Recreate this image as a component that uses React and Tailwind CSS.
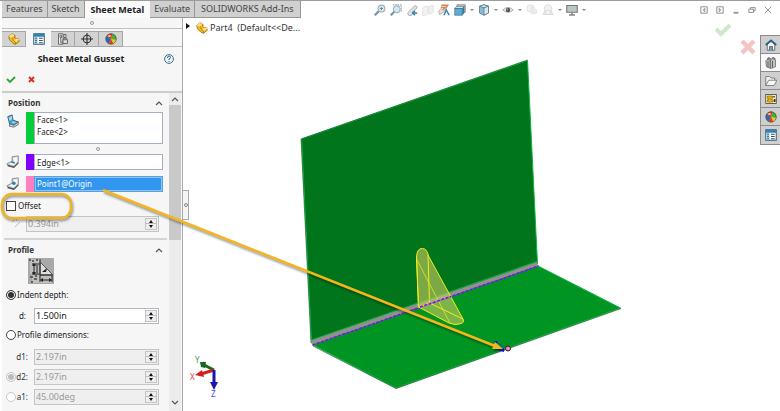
import { useState } from "react";

const PartIcon = ({ className }) => (
  <svg className={className} viewBox="0 0 16 16">
    <path d="M1 5l4-4 4 2v3l2 2 3-1 1 4-5 4-3-1-5-5z" fill="#f5b921" stroke="#8a6205" strokeWidth="1" />
    <path d="M5 1l4 2-3 3-5-1zM8 9l3-1 3-1 1 2-5 3z" fill="#ffe07a" />
    <path d="M6 6l1 4 3 2v3M9 3v3" fill="none" stroke="#a87807" />
  </svg>
);

const PropertiesIcon = ({ className }) => (
  <svg className={className} viewBox="0 0 16 16">
    <rect x="1" y="1" width="14" height="14" fill="#fff" stroke="#3d6379" strokeWidth="1.4" />
    <path d="M1 3h14" stroke="#2f82b2" strokeWidth="4" />
    <path d="M2 10h4" stroke="#9bcbe5" strokeWidth="9" />
    <path d="M3 7h2M3 10h2M3 13h2M8 7h5M8 10h5M8 13h5" stroke="#315060" strokeWidth="1.3" />
  </svg>
);

const ConfigIcon = ({ className }) => (
  <svg className={className} viewBox="0 0 16 16" fill="none" stroke="#606060" strokeWidth="1.2">
    <path d="M2 1h6v14H2zM4 3h2v3H4zM5 6v7h3" fill="#eee" />
    <path d="M9 2h3v4H9zM8 9h6v5H8zM9 9V7h4v2" fill="#ddd" />
  </svg>
);

const TargetIcon = ({ className }) => (
  <svg className={className} viewBox="0 0 16 16" fill="none" stroke="#303030" strokeWidth="1.5">
    <circle cx="8" cy="8" r="5" />
    <path d="M8 0v16M0 8h16" />
  </svg>
);

const BallIcon = ({ className }) => (
  <svg className={className} viewBox="0 0 16 16">
    <circle cx="8" cy="8" r="7" fill="#f3c623" />
    <path d="M8 8L2 4a7 7 0 0 1 8-3z" fill="#d93422" />
    <path d="M8 8l2-7a7 7 0 0 1 5 8z" fill="#45ae41" />
    <path d="M8 8L2 4a7 7 0 0 0 3 10z" fill="#2769b5" />
    <path d="M8 8l-3 6a7 7 0 0 0 6 0z" fill="#e23b22" />
    <circle cx="8" cy="8" r="7" fill="none" stroke="#444" strokeWidth=".8" />
    <ellipse cx="6" cy="4" rx="2" ry="1.2" fill="#fff" opacity=".7" />
  </svg>
);

const FacesIcon = () => (
  <svg className="size-3.5" viewBox="0 0 16 16">
    <path d="M2 3l5-2 1 6 6 2-5 4-5-2z" fill="#4a9dcc" stroke="#2a5876" />
    <path d="M3 4l4-2v4L4 8z" fill="#a5d8f2" />
    <path d="M4 11v3l5 1 5-3V9l-5 4z" fill="#d3d8da" stroke="#5d6b72" />
    <path d="M8 8l4 1-3 2-3-1z" fill="#8accec" />
  </svg>
);

const EdgeIcon = ({ point }) => (
  <svg className="size-3.5" viewBox="0 0 16 16">
    <path d="M7 2l7-1v8l-5 5-7-2-1-2 6-3z" fill="#c4c7c9" stroke="#80878b" />
    <path d="M8 3l5-1v6L9 9zM3 10l4-2 5 1-3 3z" fill="#f6f7f7" />
    <path d="M2 12l7 2 5-5" fill="none" stroke="#555" strokeWidth="1.5" />
    {point ? (
      <circle cx="9" cy="7" r="2" fill="#2781b9" />
    ) : (
      <path d="M6 8l4 1" stroke="#2781b9" strokeWidth="2" />
    )}
  </svg>
);

const GussetImage = () => (
  <svg className="h-[26px] w-[26px]" viewBox="0 0 26 26">
    <rect width="26" height="26" fill="#a9a9a9" />
    <path d="M2 1h10v15H2zM4 17h20v8H4z" fill="#bfc0bd" />
    <path d="M12 4v13h13z" fill="#dcdedb" stroke="#555" />
    <path d="M12 1v16h12M12 17v7M24 17v7M4 6h7M4 16h7M6 6v10M9 7v8M13 22h10" fill="none" stroke="#222" />
    <path d="M4 8l2-3 2 3zM4 14l2 3 2-3zM15 20l-3 2 3 2zM21 20l3 2-3 2zM14 14l5-4-1 4z" fill="#222" />
    <path d="M1 2h2M4 3h2M8 2h2M2 19h3M6 21h3M3 24h2M7 18h2" stroke="#444" strokeWidth="1.5" />
  </svg>
);

const Chevron = ({ className = "size-2", down }) => (
  <svg className={className} viewBox="0 0 8 8" fill="none" stroke="#555" strokeWidth="1.2">
    <path d={down ? "M1 2l3 3 3-3" : "M1 6l3-3 3 3"} />
  </svg>
);

const panelTabs = [
  { label: "Feature tree", Icon: PartIcon },
  { label: "Properties", Icon: PropertiesIcon },
  { label: "Configurations", Icon: ConfigIcon },
  { label: "Dimensions", Icon: TargetIcon },
  { label: "Appearances", Icon: BallIcon },
];

const ribbonTabs = ["Features", "Sketch", "Sheet Metal", "Evaluate", "SOLIDWORKS Add-Ins"];

const RibbonTabs = () => {
  const [active, setActive] = useState("Sheet Metal");
  return (
    <nav className="flex h-[18px] shrink-0 border-t border-[#9c9c9c] pl-0.5">
      {ribbonTabs.map((tab) => (
        <button
          key={tab}
          onClick={() => setActive(tab)}
          className={
            tab === active
              ? "bg-[#fafafa] px-1.5 text-[9px] font-bold whitespace-nowrap text-[#222]"
              : "border-r border-b border-[#979797] bg-[#d0d0d0] px-1 text-[9px] whitespace-nowrap text-[#444] last:px-1.5"
          }
        >
          {tab}
        </button>
      ))}
    </nav>
  );
};

const Caret = () => (
  <svg className="mr-1 ml-1 h-1 w-1" viewBox="0 0 4 4">
    <path d="M0 1h4L2 3z" fill="#888" />
  </svg>
);

const ViewToolbar = () => (
  <div className="flex items-center">
    <button aria-label="Zoom to fit" className="mr-1">
      <svg className="size-3" viewBox="0 0 16 16" fill="none">
        <path d="M1 15l6-6" stroke="#6f93ab" strokeWidth="3" />
        <circle cx="10" cy="6" r="4.5" fill="#dce9ef" stroke="#9fb0ba" strokeWidth="1.5" />
        <path d="M8 6h4M10 4v4" stroke="#50738a" />
      </svg>
    </button>
    <button aria-label="Zoom to area" className="mr-1">
      <svg className="size-3" viewBox="0 0 16 16" fill="none">
        <path d="M4 1h11v10" stroke="#777" strokeDasharray="2 1" />
        <path d="M1 15l5-5" stroke="#6f93ab" strokeWidth="3" />
        <circle cx="9" cy="7" r="4.5" fill="#d4e8f2" stroke="#a3b4bd" strokeWidth="1.5" />
      </svg>
    </button>
    <button aria-label="Previous view" className="mr-1">
      <svg className="size-3" viewBox="0 0 16 16" fill="none">
        <path d="M3 11l8-8a2 2 0 0 1 3 3L8 11a3 3 0 1 1-5 0z" fill="#e5e5e5" stroke="#939393" />
        <path d="M15 12H9m3-3l-3 3 3 3" stroke="#3388b5" strokeWidth="2" />
      </svg>
    </button>
    <button aria-label="Section view" className="mr-1 opacity-40">
      <svg className="size-3" viewBox="0 0 16 16">
        <path d="M1 5l3-2h4v10l-3 2H1zM9 4l3-2h3v9l-3 2H9z" fill="#ddd" stroke="#aaa" />
      </svg>
    </button>
    <button aria-label="Dynamic annotation" className="mr-1">
      <svg className="size-3" viewBox="0 0 16 16" fill="none">
        <path d="M5 1h9l-3 5-5 6-4 2-1-4 3-4z" fill="#eddcc6" stroke="#a5a5a5" />
        <path d="M5 2h8M4 5l8-1M6 8l7-6" stroke="#e08246" strokeWidth="1.5" />
        <path d="M8 15l3-7 4 7" stroke="#3588b4" strokeWidth="2" />
      </svg>
    </button>
    <button aria-label="View orientation" className="flex items-center">
      <svg className="size-3" viewBox="0 0 16 16">
        <path d="M4 4V1h11v10h-3" fill="#e3e3e3" stroke="#777" />
        <path d="M1 6h10v9H1z" fill="#5babd2" stroke="#4a7a97" />
        <path d="M1 6l3-3h10l-3 3z" fill="#d5e5ed" stroke="#38617a" />
        <path d="M11 6l3-3v9l-3 3z" fill="#38789c" />
      </svg>
      <Caret />
    </button>
    <button aria-label="Display style" className="flex items-center">
      <svg className="size-3" viewBox="0 0 16 16" stroke="#58717f">
        <path d="M2 3l6-2 6 2v9l-6 3-6-3z" fill="#7dc1e0" />
        <path d="M2 3l6 2 6-2-6-2z" fill="#ddeef6" />
        <path d="M8 5l6-2v9l-6 3z" fill="#e1e8eb" />
      </svg>
      <Caret />
    </button>
    <button aria-label="Hide and show items" className="flex items-center">
      <svg className="size-3" viewBox="0 0 16 16">
        <path d="M1 8q7-7 14 0-7 6-14 0z" fill="#eee" stroke="#999" />
        <circle cx="8" cy="8" r="3" fill="#555" />
        <circle cx="7" cy="7" r="1" fill="#bbb" />
      </svg>
      <Caret />
    </button>
    <button aria-label="Edit appearance" className="mr-1 opacity-40">
      <svg className="size-3" viewBox="0 0 16 16">
        <circle cx="6" cy="6" r="5" fill="#ddd" stroke="#aaa" />
        <path d="M6 6l4-4v8l-3 5" fill="#bbb" />
        <circle cx="11" cy="10" r="4" fill="#ccc" />
      </svg>
    </button>
    <button aria-label="Apply scene" className="flex items-center">
      <svg className="size-3 opacity-40" viewBox="0 0 16 16">
        <circle cx="8" cy="6" r="5" fill="#ddd" stroke="#999" />
        <path d="M1 14l3-5h8l3 5z" fill="#bbb" stroke="#999" />
        <circle cx="8" cy="11" r="2" fill="#eee" />
      </svg>
      <Caret />
    </button>
    <button aria-label="View settings" className="flex items-center">
      <svg className="size-3" viewBox="0 0 16 16">
        <path d="M1 2h14v9H1z" fill="#bcc8c8" stroke="#777" strokeWidth="1.5" />
        <path d="M8 11v3M4 14.5h8" stroke="#888" strokeWidth="2" />
      </svg>
      <Caret />
    </button>
  </div>
);

const WindowButtons = () => (
  <div className="flex items-center gap-2 pr-2">
    {[
      ["Dock left", "M1 1h8v8H1zM6 3L4 5l2 2z"],
      ["Dock right", "M1 1h8v8H1zM4 3l2 2-2 2z"],
      ["Minimize", "M2 8h6M2 9h6"],
      ["Restore", "M1 4h6v4H1zM3 4V2h6v4H7"],
      ["Close", "M1 1l8 8M9 1L1 9"],
    ].map(([label, d]) => (
      <button key={label} aria-label={label}>
        <svg className="size-2" viewBox="0 0 10 10" fill="none" stroke="#777">
          <path d={d} />
        </svg>
      </button>
    ))}
  </div>
);

const Section = ({ title, children }) => (
  <section className="pr-1.5 pl-1">
    <div className="flex h-4 items-center justify-between pl-0.5">
      <h2 className="text-[8px] font-bold text-[#333]">{title}</h2>
      <button aria-label={`Collapse ${title}`}>
        <Chevron />
      </button>
    </div>
    {children}
  </section>
);

const Spinner = ({ id, value, disabled }) => (
  <div
    className={
      disabled
        ? "flex h-4 grow border border-[#c4c4c4] bg-[#efefef] p-px text-[#999]"
        : "flex h-4 grow border border-[#b3b9c0] bg-white p-px text-[#222]"
    }
  >
    <input id={id} defaultValue={value} disabled={disabled} className="w-0 grow text-[9px] outline-none" />
    <div className="flex w-3 flex-col border border-[#c4c4c4] bg-[#eee]">
      <button aria-label={`Increase ${id}`} className="flex h-1/2 items-center justify-center border-b border-[#bbb]">
        <svg className="h-[3px] w-1" viewBox="0 0 4 3">
          <path d="M2 0l2 3H0z" fill="#111" />
        </svg>
      </button>
      <button aria-label={`Decrease ${id}`} className="flex h-1/2 items-center justify-center">
        <svg className="h-[3px] w-1" viewBox="0 0 4 3">
          <path d="M2 3l2-3H0z" fill="#111" />
        </svg>
      </button>
    </div>
  </div>
);

const radio =
  "size-2.5 shrink-0 appearance-none rounded-full border border-[#444] bg-white checked:bg-[#333] checked:shadow-[inset_0_0_0_1px_white] disabled:border-[#c8c8c8] disabled:checked:bg-[#bbb]";

const PropertyPanel = () => (
  <aside className="ml-0.5 flex w-[181px] shrink-0 flex-col border-r border-[#aaa] bg-[#f6f6f6]">
    <div className="flex h-[11px] shrink-0 items-center justify-center border-b border-[#c0c0c0]">
      <span className="size-1 rounded-full border border-[#999]" />
    </div>
    <div className="mt-0.5 flex h-4 shrink-0">
      {panelTabs.map(({ label, Icon }) => (
        <button
          key={label}
          aria-label={label}
          className={
            label === "Properties"
              ? "flex w-[25px] items-center justify-center"
              : "flex w-6 items-center justify-center border border-l-0 border-[#a6a6a6] bg-[#d2d2d2]"
          }
        >
          <Icon className="size-3" />
        </button>
      ))}
      <div className="grow border-b border-[#c0c0c0]" />
    </div>
    <div className="flex h-6 shrink-0 items-center pr-2">
      <h1 className="grow pr-1 text-center text-[9px] font-bold text-[#222]">Sheet Metal Gusset</h1>
      <button aria-label="Help">
        <svg className="size-2.5" viewBox="0 0 10 10" fill="none">
          <circle cx="5" cy="5" r="4.4" fill="#edf5fa" stroke="#456d86" />
          <path d="M3.5 4q0-2 1.5-2t1.5 1.5Q6.5 4.5 5 5v1M5 7v1" stroke="#2a6187" />
        </svg>
      </button>
    </div>
    <div className="flex h-[22px] shrink-0 items-center gap-2.5 border-b-2 border-[#ccc] pb-1 pl-1">
      <button aria-label="OK">
        <svg className="size-2.5" viewBox="0 0 10 10" fill="none" stroke="#35a332" strokeWidth="1.8">
          <path d="M1 5l3 3 5-5" />
        </svg>
      </button>
      <button aria-label="Cancel">
        <svg className="size-2.5" viewBox="0 0 10 10" fill="none" stroke="#e0301e" strokeWidth="2">
          <path d="M3 3l5 5M8 3L3 8" />
        </svg>
      </button>
    </div>

    <div className="flex min-h-0 grow">
      <div className="min-w-0 grow overflow-hidden pt-0.5">
        <Section title="Position">
          <div className="flex pt-px">
            <label htmlFor="faces" aria-label="Faces" className="w-5 pt-0.5">
              <FacesIcon />
            </label>
            <span className="w-2 bg-[#04cc3c]" />
            <textarea
              id="faces"
              readOnly
              defaultValue={"Face<1>\nFace<2>"}
              className="h-8 w-0 grow resize-none overflow-hidden border border-[#a5afc4] bg-white px-0.5 pt-px text-[8px] leading-3 text-[#222] outline-none"
            />
          </div>
          <div className="flex h-2.5 items-center pl-[90px]">
            <span className="size-1 rounded-full border border-[#999]" />
          </div>
          <div className="flex">
            <label htmlFor="edge" aria-label="Edge" className="flex w-5 items-center">
              <EdgeIcon />
            </label>
            <span className="w-2 bg-[#8000ff]" />
            <input id="edge" readOnly defaultValue="Edge<1>" className="h-4 w-0 grow border border-[#a5afc4] bg-white px-0.5 text-[8px] text-[#222] outline-none" />
          </div>
          <div className="mt-1.5 flex">
            <label htmlFor="point" aria-label="Reference point" className="flex w-5 items-center">
              <EdgeIcon point />
            </label>
            <span className="w-2 bg-[#ff80c0]" />
            <div className="flex h-4 w-0 grow border border-[#5c9fe0] bg-[#8cc4f6] p-px">
              <input id="point" readOnly defaultValue="Point1@Origin" className="w-0 grow bg-[#3296f0] px-px text-[8px] text-white outline-none" />
            </div>
          </div>
          <label className="mt-1.5 flex h-4 items-center gap-0.5 text-[8px] text-[#222]">
            <input type="checkbox" className="size-2.5 appearance-none border border-[#444] bg-white" />
            Offset
          </label>
          <div className="mt-0.5 flex pr-1">
            <label htmlFor="offset" aria-label="Offset distance" className="w-5 pl-1">
              <svg className="size-3" viewBox="0 0 12 12" fill="none" stroke="#bbb">
                <path d="M2 6l4-4 1 3M10 6L5 11" />
              </svg>
            </label>
            <Spinner id="offset" value="0.394in" disabled />
          </div>
        </Section>

        <hr className="mx-0.5 mt-1.5 mb-0.5 border-t-2 border-[#d4d4d4]" />

        <Section title="Profile">
          <button aria-label="Rounded gusset" className="ml-[22px] block">
            <GussetImage />
          </button>
          <div className="mt-1 flex h-3.5 items-center gap-px text-[8px] text-[#222]">
            <input id="indent" type="radio" name="profile" defaultChecked className={radio} />
            <label htmlFor="indent">Indent depth:</label>
          </div>
          <div className="mt-1.5 flex items-center pr-1">
            <label htmlFor="d" className="w-7 pr-2 text-right text-[8px] text-[#222]">d:</label>
            <Spinner id="d" value="1.500in" />
          </div>
          <div className="mt-1 mb-1.5 flex h-3.5 items-center gap-px text-[8px] text-[#222]">
            <input id="dims" type="radio" name="profile" className={radio} />
            <label htmlFor="dims">Profile dimensions:</label>
          </div>
          <div className="space-y-1 pt-px pr-1 text-[8px] text-[#333]">
            <div className="flex items-center">
              <label htmlFor="d1" className="w-7 pr-1.5 text-right">d1:</label>
              <Spinner id="d1" value="2.197in" disabled />
            </div>
            <div className="flex items-center">
              <input aria-label="Use d2" type="radio" name="second" disabled defaultChecked className={radio} />
              <label htmlFor="d2" className="w-[18px] pr-1.5 text-right">d2:</label>
              <Spinner id="d2" value="2.197in" disabled />
            </div>
            <div className="flex items-center">
              <input aria-label="Use a1" type="radio" name="second" disabled className={radio} />
              <label htmlFor="a1" className="w-[18px] pr-1.5 text-right">a1:</label>
              <Spinner id="a1" value="45.00deg" disabled />
            </div>
          </div>
        </Section>
      </div>
      <div className="mr-px flex w-3 shrink-0 flex-col items-center bg-[#ececec]">
        <button aria-label="Scroll up" className="flex h-3 items-center">
          <Chevron />
        </button>
        <div className="h-[135px] w-full bg-[#c9c9c9]" />
        <button aria-label="Scroll down" className="mt-auto flex h-4 items-center">
          <Chevron down />
        </button>
      </div>
    </div>
  </aside>
);

// Model coordinates are window pixels; the view box starts at the viewport corner.
const Model = () => (
  <svg className="absolute inset-0 size-full" viewBox="183 18 597 393">
    <path d="M301.5 139L527.5 60.5 537.5 264 311.5 343z" fill="#00751c" stroke="#0bb53e" />
    <path d="M301 139L527.5 60M311 343L301 139" fill="none" stroke="#14572a" strokeWidth=".6" />
    <path d="M313 345l225-79 82.5 42L396 388z" fill="#009423" stroke="#0bb53e" />
    <path d="M313 346l83 42.5L621 308.5" fill="none" stroke="#14572a" strokeWidth=".7" />
    <path d="M311.5 342.5L537.5 264" stroke="#92908f" strokeWidth="4" />
    <path d="M311.5 340L537 261.5" stroke="#1fbd50" strokeWidth=".8" />
    <path d="M312.5 345L538.5 266" stroke="#2c7a3c" />
    <path d="M312.5 345L538.5 266" stroke="#7714f5" strokeWidth="1.6" strokeDasharray="3 1.5" />
    <g fill="none" stroke="#efed19" strokeWidth="1">
      <path d="M416.5 257Q417 248 422.5 248.5 427 248.5 428.5 256L463 319Q466 324 455 324.5L449 323 418.5 307z" fill="#c0c45c" fillOpacity=".65" />
      <path d="M416.5 257L418.5 307 429.5 303 428 255M429.5 303L463 319" />
      <path d="M417 260L450 323" opacity=".7" />
    </g>
    <path d="M417.5 303.5L447 293" stroke="#44cc53" strokeWidth=".7" />
    <path d="M420 307L451 296.5" stroke="#7714f5" strokeWidth="1.6" strokeDasharray="3 1.5" />
    <path d="M495 342l10 5M495 350h10" stroke="#0b55a0" />
    <path d="M494 341h4l-2 4zM498 350l6-2v4z" fill="#1010e0" />
    <circle cx="508" cy="348.5" r="2.5" fill="#ff86b8" stroke="#222" />
    <g strokeWidth="3">
      <path d="M214 370l-10-5" stroke="#14691f" />
      <path d="M214 370l-13 4" stroke="#d01f1f" />
      <path d="M214 370v14" stroke="#1818a8" />
    </g>
    <path d="M200 362l6 0-1 6-4-1z" fill="#14691f" />
    <path d="M195 375l7-5 2 7z" fill="#d01f1f" />
    <path d="M210 382h8l-4 8z" fill="#1818a8" />
    <g className="text-[8px]">
      <text x="195" y="363" fill="#3b9a48">Y</text>
      <text x="190" y="380" fill="#e53b3b">X</text>
      <text x="211" y="397" fill="#4444ee">Z</text>
    </g>
  </svg>
);

const HouseIcon = ({ className }) => (
  <svg className={className} viewBox="0 0 16 16">
    <path d="M3 7v8h10V7L8 3z" fill="#f5f5f5" stroke="#44545e" />
    <path d="M1 8l7-6 7 6" fill="none" stroke="#245f8d" strokeWidth="2.5" />
    <path d="M6 15v-5h4v5" fill="#7c9eb5" stroke="#44545e" />
  </svg>
);

const LibraryIcon = ({ className }) => (
  <svg className={className} viewBox="0 0 16 16" stroke="#666">
    <path d="M1 5l3-2 3 1v11l-5-2zM7 4l3-2 4 2v9l-5 2H7z" fill="#c5c5c5" />
    <path d="M4 5v9M10 5v9M3 3l2-2 3 2M9 2l2-1 3 2" fill="none" strokeWidth="1.5" />
  </svg>
);

const FolderIcon = ({ className }) => (
  <svg className={className} viewBox="0 0 16 16" stroke="#666">
    <path d="M1 14V2h5l2 2h5v3" fill="#eee" />
    <path d="M1 14L5 7h11l-4 7z" fill="#fafafa" />
  </svg>
);

const PaletteIcon = ({ className }) => (
  <svg className={className} viewBox="0 0 16 16">
    <rect x="1" y="2" width="14" height="12" fill="#fff3c4" stroke="#333" />
    <path d="M3 4h7v3H8v2h3v3H3V9h2V7H3z" fill="#e6b31a" stroke="#8e6b05" />
    <path d="M12 4v2M13 8v4" stroke="#333" strokeWidth="2" />
  </svg>
);

const TaskPane = () => (
  <div className="flex w-5 flex-col border border-r-0 border-[#8c8c8c]">
    {[
      ["Home", HouseIcon],
      ["Design library", LibraryIcon],
      ["File explorer", FolderIcon],
      ["View palette", PaletteIcon],
      ["Appearances", BallIcon],
      ["Custom properties", PropertiesIcon],
    ].map(([label, Icon]) => (
      <button
        key={label}
        aria-label={label}
        className={
          label === "Design library"
            ? "flex h-[18px] items-center justify-center border-b border-[#8c8c8c] bg-[#f8f8f8]"
            : "flex h-[18px] items-center justify-center border-b border-[#8c8c8c] bg-[#cfcfcf] last:border-b-0"
        }
      >
        <Icon className="size-3" />
      </button>
    ))}
  </div>
);

const Viewport = () => (
  <main className="relative flex min-w-0 grow justify-between">
    <Model />
    <button aria-label="Collapse panel" className="absolute top-[172px] left-0 flex h-[30px] w-1.5 items-center justify-center border border-l-0 border-[#aaa] bg-[#f4f4f4]">
      <span className="size-1 rounded-full border border-[#888]" />
    </button>
    <button className="relative flex h-5 items-center pl-[3px] text-[9px] text-[#333]">
      <svg className="mr-1.5 mb-1 h-1.5 w-1" viewBox="0 0 4 6">
        <path d="M0 0l4 3-4 3z" fill="#111" />
      </svg>
      <PartIcon className="mr-0.5 size-3" />
      <span className="whitespace-pre">{"Part4  (Default<<De..."}</span>
    </button>
    <div className="relative flex items-start pt-[5px]">
      <button aria-label="Accept" className="mr-2">
        <svg className="h-3.5 w-[18px]" viewBox="0 0 18 14" fill="none" stroke="#cfe8cb" strokeWidth="4">
          <path d="M2 6l5 5 9-9" />
        </svg>
      </button>
      <button aria-label="Reject" className="mt-4 mr-1">
        <svg className="size-4" viewBox="0 0 16 16" fill="none" stroke="#f4c4c4" strokeWidth="4.5">
          <path d="M2 2l12 12M14 2L2 14" />
        </svg>
      </button>
      <div className="mt-3">
        <TaskPane />
      </div>
    </div>
  </main>
);

const Callout = () => (
  <svg className="pointer-events-none absolute inset-0 size-full" fill="none">
    <g className="drop-shadow-[1px_2px_1px_rgba(0,0,0,0.4)]">
      <rect x="2" y="194" width="69" height="24" rx="10" stroke="#f0b323" strokeWidth="2.5" />
      <path d="M103 190L495 346" stroke="#f5b51d" strokeWidth="2.5" />
      <path d="M503 349l-11 0 3-7z" fill="#f5b51d" />
    </g>
  </svg>
);

export default function App() {
  return (
    <div className="relative flex h-screen flex-col overflow-hidden bg-white font-['Noto_Sans','Open_Sans',sans-serif]">
      <header className="flex">
        <RibbonTabs />
        <div className="flex grow items-center justify-between border-t border-[#9c9c9c] pl-[73px]">
          <ViewToolbar />
          <WindowButtons />
        </div>
      </header>
      <div className="flex min-h-0 grow">
        <PropertyPanel />
        <Viewport />
      </div>
      <Callout />
    </div>
  );
}
